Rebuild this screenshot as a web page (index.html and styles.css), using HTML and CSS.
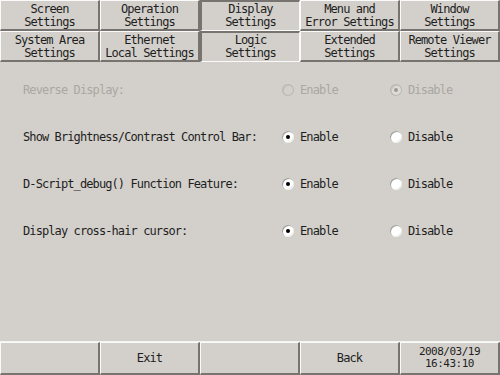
FILE: index.html
```html
<!DOCTYPE html>
<html>
<head>
	<meta charset="utf-8">
	<title>Display Settings</title>
	<link rel="stylesheet" href="styles.css">
</head>
<body>
	<div id="screen">
		<div id="tabs">
			<a class="tab">Screen<br>Settings</a>
			<a class="tab">Operation<br>Settings</a>
			<a class="tab on">Display<br>Settings</a>
			<a class="tab">Menu and<br>Error Settings</a>
			<a class="tab">Window<br>Settings</a>
			<a class="tab">System Area<br>Settings</a>
			<a class="tab">Ethernet<br>Local Settings</a>
			<a class="tab on">Logic<br>Settings</a>
			<a class="tab">Extended<br>Settings</a>
			<a class="tab">Remote Viewer<br>Settings</a>
		</div>
		<div id="main">
			<div class="row off">
				<span class="label">Reverse Display:</span>
				<span class="opt"><i class="radio"></i>Enable</span>
				<span class="opt"><i class="radio checked"></i>Disable</span>
			</div>
			<div class="row">
				<span class="label">Show Brightness/Contrast Control Bar:</span>
				<span class="opt"><i class="radio checked"></i>Enable</span>
				<span class="opt"><i class="radio"></i>Disable</span>
			</div>
			<div class="row">
				<span class="label">D-Script_debug() Function Feature:</span>
				<span class="opt"><i class="radio checked"></i>Enable</span>
				<span class="opt"><i class="radio"></i>Disable</span>
			</div>
			<div class="row">
				<span class="label">Display cross-hair cursor:</span>
				<span class="opt"><i class="radio checked"></i>Enable</span>
				<span class="opt"><i class="radio"></i>Disable</span>
			</div>
		</div>
		<div id="bottom">
			<a class="btn"></a>
			<a class="btn">Exit</a>
			<a class="btn"></a>
			<a class="btn">Back</a>
			<a class="btn clock">2008/03/19<br>16:43:10</a>
		</div>
	</div>
</body>
</html>
```

FILE: styles.css
```css
* { margin: 0; padding: 0; box-sizing: border-box; }
body { background: #d3d0cb; font-family: "DejaVu Sans Mono", "Liberation Mono", monospace; font-size: 12px; letter-spacing: -0.9px; color: #1e1e1e; }
#screen { width: 500px; height: 375px; display: flex; flex-direction: column; }

#tabs { display: grid; grid-template-columns: repeat(5, 100px); grid-template-rows: 31px 31px; }
.tab { display: flex; align-items: center; justify-content: center; text-align: center; line-height: 13px;
	border-top: 1px solid #fafafa; border-left: 1px solid #fafafa;
	border-right: 2px solid #77746f; border-bottom: 2px solid #77746f; padding-top: 1px; }
.tab.on { border-top: 2px solid #77746f; border-left: 2px solid #77746f;
	border-right: 1px solid #fafafa; border-bottom: 1px solid #fafafa; padding-top: 0; }

#main { flex: 1; padding-top: 4px; border-bottom: 1px solid #f4f4f4; }
.row { display: flex; align-items: center; height: 47px; }
.label { width: 282px; padding-left: 23px; }
.opt { display: flex; align-items: center; width: 108px; }
.row.off { color: #aaa7a2; }

.radio { display: inline-block; width: 12px; height: 12px; border-radius: 50%; margin-right: 6px; position: relative;
	background: #fff; box-shadow: inset 1px 1px 0 #a09e9a, inset -1px -1px 0 #eeece8; }
.radio.checked::after { content: ""; position: absolute; left: 4px; top: 4px; width: 4px; height: 4px; border-radius: 50%; background: #000; }
.off .radio { background: #d3d0cb; box-shadow: inset 0 0 0 1px #bbb8b3, inset 1px 1px 0 1px #c6c3be; }
.off .radio.checked { background: #dedbd6; }
.off .radio.checked::after { background: #9c9994; }

#bottom { display: grid; grid-template-columns: repeat(5, 100px); height: 33px; }
.btn { display: flex; align-items: center; justify-content: center; text-align: center; line-height: 13px;
	border-top: 1px solid #fafafa; border-left: 1px solid #fafafa;
	border-right: 2px solid #77746f; border-bottom: 2px solid #77746f; }
.clock { font-size: 11px; letter-spacing: -0.5px; line-height: 12px; padding-bottom: 1px; }
```
